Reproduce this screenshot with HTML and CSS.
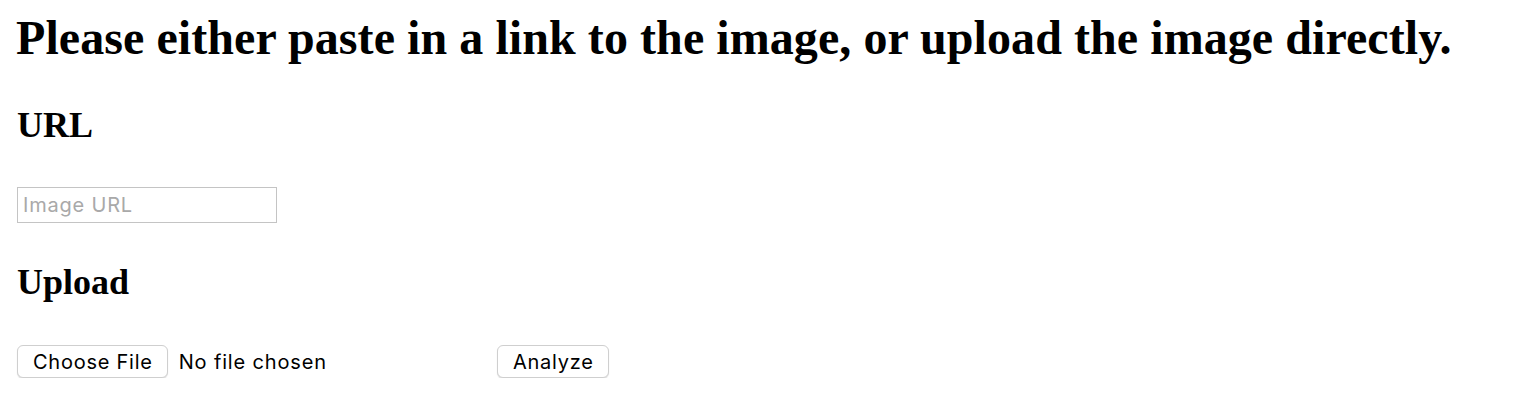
FILE: index.html
```html
<!DOCTYPE html>
<html>
<head>
<meta charset="utf-8">
<link rel="stylesheet" href="styles.css">
</head>
<body>
<h1 class="title">Please either paste in a link to the image, or upload the image directly.</h1>
<h2 class="section">URL</h2>
<input class="url-input" type="text" placeholder="Image URL">
<h2 class="section">Upload</h2>
<form class="upload-row">
  <span class="file-picker">
    <button type="button" class="btn">Choose File</button>
    <span class="file-name">No file chosen</span>
  </span>
  <button type="button" class="btn">Analyze</button>
</form>
</body>
</html>
```
FILE: styles.css
```css
body {
  margin: 0;
  padding: 0 17px;
  font-family: "Liberation Serif", "Times New Roman", serif;
  color: #000;
  background: #fff;
}
.title {
  font-size: 48px;
  font-weight: bold;
  margin: 10px 0 0 -1px;
  line-height: 56px;
  letter-spacing: 0.07px;
  white-space: nowrap;
}
.section {
  font-size: 36px;
  font-weight: bold;
  margin: 38px 0 0 0;
  line-height: 42px;
}
.url-input {
  display: block;
  box-sizing: border-box;
  width: 260px;
  height: 36px;
  margin: 41px 0 0 0;
  padding: 2px 5px;
  border: 1px solid #c4c4c4;
  font-family: Inter, "Liberation Sans", Arial, sans-serif;
  font-size: 20px;
  letter-spacing: 0.8px;
  outline: none;
}
.url-input::placeholder {
  color: #a9a9a9;
}
.upload-row {
  display: flex;
  align-items: center;
  margin: 42px 0 0 0;
}
.file-picker {
  display: flex;
  align-items: center;
  width: 480px;
}
.btn {
  box-sizing: border-box;
  height: 33px;
  padding: 0 14px 0 15px;
  background: #fff;
  border: 1px solid #cfcfcf;
  border-radius: 6px;
  box-shadow: 0 1px 1px rgba(0,0,0,0.12);
  font-family: Inter, "Liberation Sans", Arial, sans-serif;
  font-size: 20px;
  letter-spacing: 0.75px;
  color: #000;
}
.file-name {
  margin-left: 11px;
  font-family: Inter, "Liberation Sans", Arial, sans-serif;
  font-size: 20px;
  letter-spacing: 0.85px;
}
```
